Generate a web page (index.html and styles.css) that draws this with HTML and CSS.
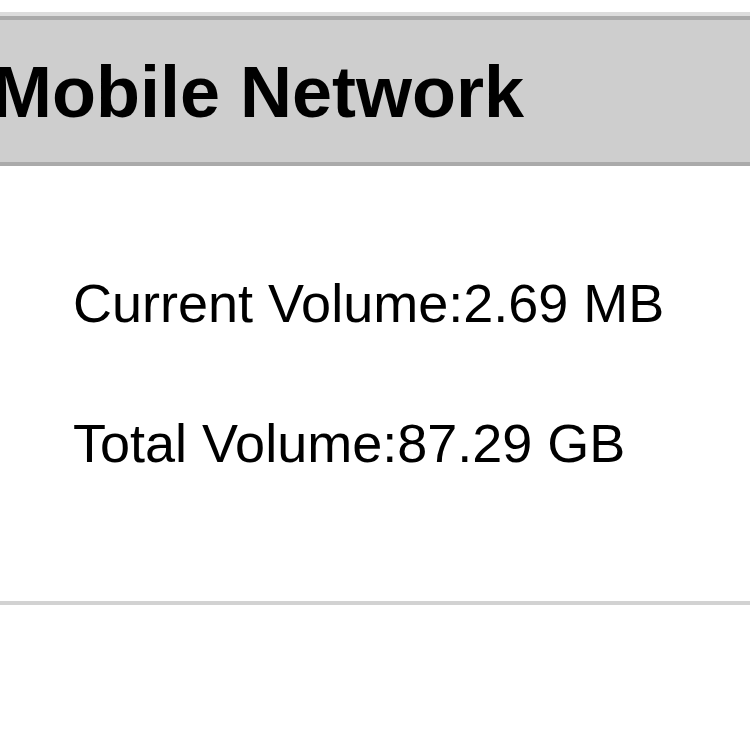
FILE: index.html
```html
<!DOCTYPE html>
<html lang="en">
<head>
    <meta charset="UTF-8">
    <meta name="viewport" content="width=device-width, initial-scale=1.0">
    <title>Mobile Network</title>
    <link rel="stylesheet" href="styles.css">
</head>
<body>
    <div class="panel">
        <div class="panel-header">
            <h1 class="panel-title">Mobile Network</h1>
        </div>
        <div class="panel-body">
            <p class="stat">Current Volume:2.69 MB</p>
            <p class="stat">Total Volume:87.29 GB</p>
        </div>
    </div>
</body>
</html>
```

FILE: styles.css
```css
body {
    font-family: "Liberation Sans", Arial, sans-serif;
    margin: 0;
    padding: 0;
    background-color: #fff;
    color: #000;
}
.panel {
    margin-top: 12px;
    border-top: 4px solid #dcdcdc;
}
.panel-header {
    background-color: #cecece;
    border-top: 4px solid #aaaaaa;
    border-bottom: 4px solid #aaaaaa;
    padding: 31px 0 29px 0;
}
.panel-title {
    margin: 0;
    font-size: 72px;
    font-weight: bold;
    line-height: 82px;
    text-indent: -8px;
    white-space: nowrap;
}
.panel-body {
    padding: 106px 0 127px 73px;
    border-bottom: 4px solid #d2d2d2;
}
.stat {
    margin: 0;
    font-size: 54px;
    line-height: 62px;
}
.stat + .stat {
    margin-top: 78px;
}
```
